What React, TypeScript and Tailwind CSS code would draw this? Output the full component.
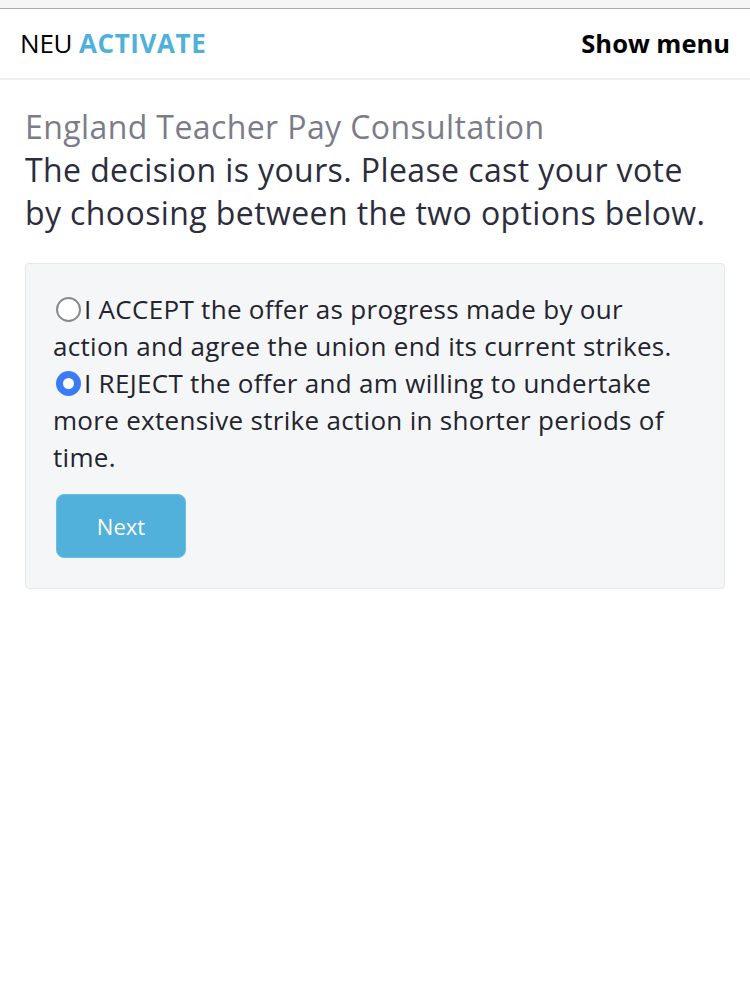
import React from "react";

export default function App() {
  return (
    <div className="min-h-[989px] bg-white" style={{ fontFamily: "'Open Sans', Lato, sans-serif" }}>
      <div className="h-[8px] bg-[#f6f6f6] border-b border-[#aaaaaa] box-content" />
      <header className="h-[71px] flex items-center justify-between px-[20px] border-b-2 border-[#eeeff2]">
        <div className="text-[26px] tracking-[-0.2px]">
          <span className="text-black">NEU </span>
          <span className="font-bold text-[#4fb1d9] tracking-[0.6px]">ACTIVATE</span>
        </div>
        <div className="text-[25.5px] font-bold text-black">Show menu</div>
      </header>
      <main className="px-[25px] pt-[25px]">
        <h1 className="text-[32px] leading-[43px] text-[#7b7c89] tracking-[0.4px]">England Teacher Pay Consultation</h1>
        <p className="text-[32px] leading-[43px] text-[#2c2d3c] tracking-[0.4px] whitespace-nowrap">
          The decision is yours. Please cast your vote<br />by choosing between the two options below.
        </p>
        <div className="mt-[29px] bg-[#f5f6f8] border border-[#e6e7ea] rounded-[4px] pl-[27px] pr-[20px] pt-[27px] pb-[30px]">
          <label className="block text-[26px] leading-[37px] text-[#23242e] tracking-[0.3px] whitespace-nowrap">
            <span className="inline-block align-[-3px] w-[25px] h-[25px] rounded-full border-[2px] border-[#8a8a8a] bg-white mx-[3px]" />
            I ACCEPT the offer as progress made by our<br />action and agree the union end its current strikes.
          </label>
          <label className="block text-[26px] leading-[37px] text-[#23242e] tracking-[0.3px] whitespace-nowrap">
            <span className="inline-block align-[-3px] w-[25px] h-[25px] rounded-full border-[7px] border-[#3b7cf6] bg-white mx-[3px]" />
            I REJECT the offer and am willing to undertake<br />more extensive strike action in shorter periods of<br />time.
          </label>
          <button className="mt-[18px] ml-[3px] w-[130px] h-[64px] bg-[#52b1da] rounded-[8px] border border-[#6bc0e2] text-white text-[22px]">
            Next
          </button>
        </div>
      </main>
    </div>
  );
}
